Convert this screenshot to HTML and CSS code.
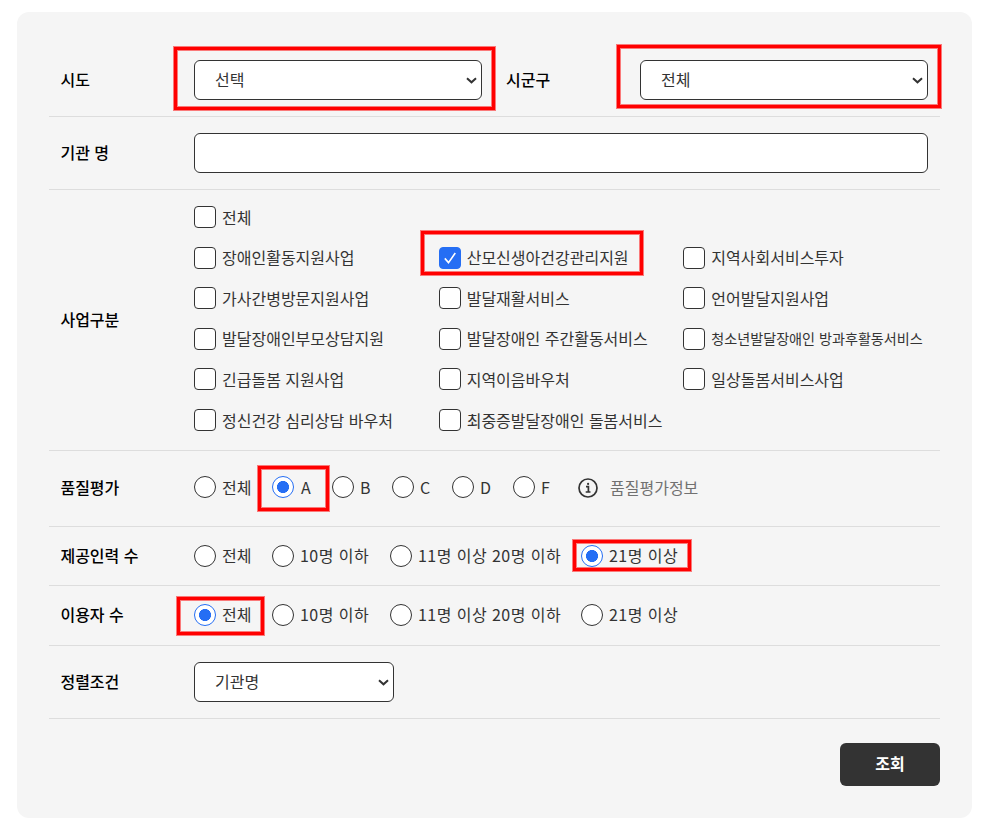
FILE: index.html
```
<!DOCTYPE html>
<html lang="ko">
<head>
    <meta charset="UTF-8">
    <meta name="viewport" content="width=device-width, initial-scale=1.0">
    <title>제공기관 검색</title>
    <link rel="stylesheet" href="styles.css">
</head>
<body>
    <form class="search-box">
        <div class="row">
            <label class="row-title" for="sido">시도</label>
            <select id="sido" class="field half"><option>선택</option></select>
            <label class="row-title second" for="sigungu">시군구</label>
            <select id="sigungu" class="field half"><option>전체</option></select>
        </div>
        <div class="row">
            <label class="row-title" for="orgName">기관 명</label>
            <input type="text" id="orgName" class="field full">
        </div>
        <div class="row">
            <span class="row-title">사업구분</span>
            <div class="check-grid">
                <label class="choice all"><input type="checkbox"><span>전체</span></label>
                <label class="choice"><input type="checkbox"><span>장애인활동지원사업</span></label>
                <label class="choice"><input type="checkbox" checked><span>산모신생아건강관리지원</span></label>
                <label class="choice"><input type="checkbox"><span>지역사회서비스투자</span></label>
                <label class="choice"><input type="checkbox"><span>가사간병방문지원사업</span></label>
                <label class="choice"><input type="checkbox"><span>발달재활서비스</span></label>
                <label class="choice"><input type="checkbox"><span>언어발달지원사업</span></label>
                <label class="choice"><input type="checkbox"><span>발달장애인부모상담지원</span></label>
                <label class="choice"><input type="checkbox"><span>발달장애인 주간활동서비스</span></label>
                <label class="choice"><input type="checkbox"><span class="small">청소년발달장애인 방과후활동서비스</span></label>
                <label class="choice"><input type="checkbox"><span>긴급돌봄 지원사업</span></label>
                <label class="choice"><input type="checkbox"><span>지역이음바우처</span></label>
                <label class="choice"><input type="checkbox"><span>일상돌봄서비스사업</span></label>
                <label class="choice"><input type="checkbox"><span>정신건강 심리상담 바우처</span></label>
                <label class="choice"><input type="checkbox"><span>최중증발달장애인 돌봄서비스</span></label>
            </div>
        </div>
        <div class="row quality">
            <span class="row-title">품질평가</span>
            <div class="radio-list grades">
                <label class="choice"><input type="radio" name="grade"><span>전체</span></label>
                <label class="choice letter"><input type="radio" name="grade" checked><span>A</span></label>
                <label class="choice"><input type="radio" name="grade"><span>B</span></label>
                <label class="choice"><input type="radio" name="grade"><span>C</span></label>
                <label class="choice"><input type="radio" name="grade"><span>D</span></label>
                <label class="choice"><input type="radio" name="grade"><span>F</span></label>
            </div>
            <a class="info">
                <svg width="20" height="20" viewBox="0 0 20 20" fill="none" stroke="#333" stroke-width="1.7">
                    <circle cx="10" cy="10" r="9"/>
                    <path d="M8 8.7h2.4v5M7.7 14h4.8"/>
                    <circle cx="10.1" cy="5.9" r="1.1" fill="#333" stroke="none"/>
                </svg>
                <span>품질평가정보</span>
            </a>
        </div>
        <div class="row staff">
            <span class="row-title">제공인력 수</span>
            <div class="radio-list counts">
                <label class="choice"><input type="radio" name="staff"><span>전체</span></label>
                <label class="choice"><input type="radio" name="staff"><span class="range">10명 이하</span></label>
                <label class="choice"><input type="radio" name="staff"><span class="range">11명 이상 20명 이하</span></label>
                <label class="choice"><input type="radio" name="staff" checked><span class="range">21명 이상</span></label>
            </div>
        </div>
        <div class="row users">
            <span class="row-title">이용자 수</span>
            <div class="radio-list counts">
                <label class="choice"><input type="radio" name="users" checked><span>전체</span></label>
                <label class="choice"><input type="radio" name="users"><span class="range">10명 이하</span></label>
                <label class="choice"><input type="radio" name="users"><span class="range">11명 이상 20명 이하</span></label>
                <label class="choice"><input type="radio" name="users"><span class="range">21명 이상</span></label>
            </div>
        </div>
        <div class="row">
            <label class="row-title" for="sort">정렬조건</label>
            <select id="sort" class="field short"><option>기관명</option></select>
        </div>
        <div class="actions">
            <button type="button" class="search-button">조회</button>
        </div>

        <!-- Red guide boxes over the fields to fill in -->
        <i class="guide guide-sido"></i>
        <i class="guide guide-sigungu"></i>
        <i class="guide guide-service"></i>
        <i class="guide guide-grade"></i>
        <i class="guide guide-staff"></i>
        <i class="guide guide-users"></i>
    </form>
</body>
</html>
```
FILE: styles.css
```
* {
	box-sizing: border-box;
}

body {
	margin: 0;
	padding: 12px 14px 17px 17px;
	background: #fff;
	color: #333;
	font-family: "Noto Sans CJK KR", sans-serif;
	font-size: 16px;
	line-height: 24px;
}

.search-box {
	position: relative;
	width: 955px;
	height: 806px;
	padding: 32px;
	border-radius: 12px;
	background: #f5f5f5;
}

.row {
	display: flex;
	align-items: center;
	padding: 16px 12px;
	border-bottom: 1px solid #ddd;
}

.row-title {
	width: 133px;
	padding-bottom: 2px;
	color: #000;
	font-weight: 500;
	text-indent: -0.6px;
}

.row-title.second {
	width: 134px;
	margin-left: 24px;
	text-indent: 0;
}

.field {
	height: 40px;
	padding: 0 20px 2px;
	border: 1px solid #333;
	border-radius: 6px;
	background-color: #fff;
	color: #333;
	font-family: inherit;
	font-size: 16px;
}

select.field {
	appearance: none;
	background-image: url("data:image/svg+xml,%3Csvg xmlns='http://www.w3.org/2000/svg' width='11' height='7' fill='none' stroke='%23333' stroke-width='2'%3E%3Cpath d='M1 1.3l4.5 4 4.5-4'/%3E%3C/svg%3E");
	background-repeat: no-repeat;
	background-position: right 4px top 16px;
}

.half {
	width: 288px;
}

.full {
	width: 734px;
}

.short {
	width: 200px;
}

.check-grid {
	display: grid;
	grid-template-columns: repeat(3, 1fr);
	grid-auto-rows: 24.6px;
	row-gap: 16px;
	width: 734px;
	height: 228px;
}

.choice {
	display: flex;
	align-items: flex-start;
	gap: 6px;
	white-space: nowrap;
}

.choice span {
	margin-top: -1px;
}

.check-grid .choice span {
	margin-top: -1.3px;
}

.counts .choice span {
	margin-top: -2px;
}

.all {
	grid-column: 1 / -1;
}

.letter {
	gap: 7px;
}

.choice .small {
	font-size: 14.1px;
}

.range {
	letter-spacing: 0.45px;
}

.choice input {
	appearance: none;
	flex: none;
	width: 22px;
	height: 22px;
	margin: 0;
	border: 1px solid #333;
	border-radius: 4px;
	background: #fff;
}

.choice input[type="checkbox"]:checked {
	border-color: #256ef4;
	background: #256ef4 url("data:image/svg+xml,%3Csvg xmlns='http://www.w3.org/2000/svg' width='20' height='20' fill='none' stroke='%23fff' stroke-width='1.6'%3E%3Cpath d='M4.8 10.4l3.7 4.2 6.8-9.6'/%3E%3C/svg%3E") center no-repeat;
}

.choice input[type="radio"] {
	border-radius: 50%;
}

.choice input[type="radio"]:checked {
	border-color: #256ef4;
	background: radial-gradient(circle, #256ef4 5.7px, #fff 6.3px);
}

.radio-list {
	display: grid;
	height: 24px;
}

.grades {
	grid-template-columns: 78px 60px 60px 60px 61px 67px;
}

.counts {
	grid-template-columns: 78px 118px 191px 110px;
}

.quality {
	height: 76px;
	padding-bottom: 18px;
}

.staff {
	height: 59px;
}

.staff .radio-list {
	margin-top: 2px;
}

.users {
	height: 60px;
}

.users .row-title {
	padding-bottom: 3px;
}

.info {
	display: flex;
	align-items: center;
	gap: 12px;
	margin-left: -2px;
	color: #717171;
}

.info span {
	padding-bottom: 2px;
}

.actions {
	display: flex;
	justify-content: flex-end;
	padding-top: 24px;
}

.search-button {
	width: 100px;
	height: 43px;
	padding: 0 6px 4px;
	border: none;
	border-radius: 6px;
	background: #333;
	color: #fff;
	font-family: inherit;
	font-size: 16px;
	font-weight: 700;
}

.guide {
	position: absolute;
	border: 3px solid #f00;
	box-shadow: 0 0 0 1px rgba(255, 0, 0, 0.5), inset 0 0 0 1px rgba(255, 0, 0, 0.5);
	pointer-events: none;
}

.guide-sido {
	left: 157px;
	top: 35px;
	width: 321px;
	height: 63px;
}

.guide-sigungu {
	left: 600px;
	top: 33px;
	width: 324px;
	height: 63px;
}

.guide-service {
	left: 404px;
	top: 219px;
	width: 222px;
	height: 44px;
}

.guide-grade {
	left: 241px;
	top: 454px;
	width: 71px;
	height: 45px;
}

.guide-staff {
	left: 556px;
	top: 528px;
	width: 118px;
	height: 31px;
}

.guide-users {
	left: 160px;
	top: 585px;
	width: 87px;
	height: 38px;
}
```
